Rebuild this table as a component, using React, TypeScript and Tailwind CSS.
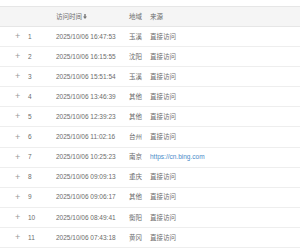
const rows = [
  { id: 1, time: "2025/10/06 16:47:53", region: "玉溪", source: "直接访问" },
  { id: 2, time: "2025/10/06 16:15:55", region: "沈阳", source: "直接访问" },
  { id: 3, time: "2025/10/06 15:51:54", region: "玉溪", source: "直接访问" },
  { id: 4, time: "2025/10/06 13:46:39", region: "其他", source: "直接访问" },
  { id: 5, time: "2025/10/06 12:39:23", region: "其他", source: "直接访问" },
  { id: 6, time: "2025/10/06 11:02:16", region: "台州", source: "直接访问" },
  { id: 7, time: "2025/10/06 10:25:23", region: "南京", source: "https://cn.bing.com" },
  { id: 8, time: "2025/10/06 09:09:13", region: "重庆", source: "直接访问" },
  { id: 9, time: "2025/10/06 09:06:17", region: "其他", source: "直接访问" },
  { id: 10, time: "2025/10/06 08:49:41", region: "衡阳", source: "直接访问" },
  { id: 11, time: "2025/10/06 07:43:18", region: "黄冈", source: "直接访问" },
];

const App = () => {
  return (
    <div
      className="w-[300px] h-[250px] overflow-hidden bg-white text-[6.5px] text-[#6b6b6b]"
      style={{ fontFamily: '"Liberation Sans", "Noto Sans CJK SC", sans-serif' }}
    >
      <div className="h-[6px]" />
      {/* header */}
      <div className="flex items-center h-[21px] bg-[#f5f5f5] border-y border-[#e6e6e6]">
        <div className="w-[56px] shrink-0" />
        <div className="w-[73px] shrink-0 flex items-center">
          访问时间
          <svg width="4" height="5" viewBox="0 0 4 5" className="ml-px">
            <path d="M1.3 0h1.4v2.6H4L2 5 0 2.6h1.3z" fill="#777" />
          </svg>
        </div>
        <div className="w-[21px] shrink-0">地域</div>
        <div className="flex-1">来源</div>
      </div>

      {rows.map((r) => (
        <div key={r.id} className="flex items-center h-[20.1px] border-b border-[#eee]">
          <div className="w-[15px] shrink-0" />
          <div className="w-[13px] shrink-0 text-[9px] text-[#999] leading-none">+</div>
          <div className="w-[28px] shrink-0">{r.id}</div>
          <div className="w-[73px] shrink-0">{r.time}</div>
          <div className="w-[21px] shrink-0">{r.region}</div>
          <div className={r.source.startsWith("http") ? "flex-1 text-[#4a8bc9]" : "flex-1"}>
            {r.source}
          </div>
        </div>
      ))}
    </div>
  );
};

export default App;
